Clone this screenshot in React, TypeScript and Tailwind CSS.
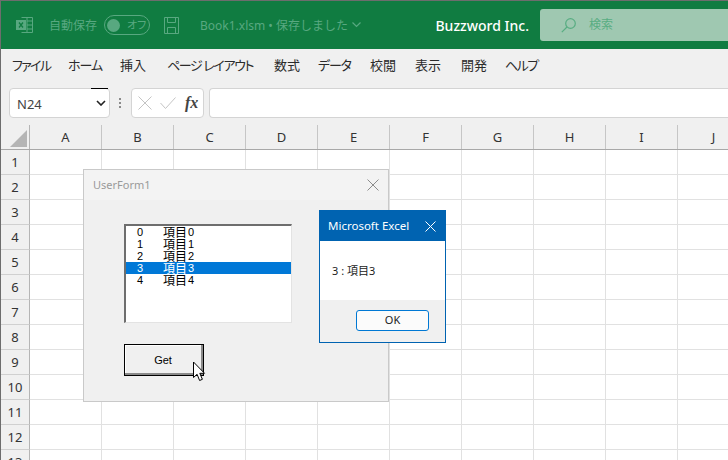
const cjk = "font-['Noto_Sans','Noto_Sans_CJK_JP',sans-serif]"

const menus = [
  { label: "ファイル", w: "w-[56px]", track: "tracking-[-1.7px]" },
  { label: "ホーム", w: "w-[52px]", track: "tracking-[-1px]" },
  { label: "挿入", w: "w-[47px]", track: "" },
  { label: "ページ レイアウト", w: "w-[107px]", track: "tracking-[-1.4px]" },
  { label: "数式", w: "w-[44px]", track: "" },
  { label: "データ", w: "w-[52px]", track: "tracking-[-1.2px]" },
  { label: "校閲", w: "w-[45px]", track: "" },
  { label: "表示", w: "w-[46px]", track: "" },
  { label: "開発", w: "w-[44px]", track: "" },
  { label: "ヘルプ", w: "w-[40px]", track: "tracking-[-1.5px]" },
]
const columns = ["A", "B", "C", "D", "E", "F", "G", "H", "I", "J"]
const rows = [1, 2, 3, 4, 5, 6, 7, 8, 9, 10, 11, 12, 13]
const items = ["0", "1", "2", "3", "4"]

function ExcelIcon() {
  return (
    <svg width="18" height="18" viewBox="0 0 18 18" fill="none" stroke="#58a880" strokeWidth="1">
      <path d="M5.5 1.5h11v15h-11M11 1.5v15M11 5h5.5M11 9h5.5M11 13h5.5" />
      <rect x="0.5" y="4.5" width="9" height="9" fill="#58a880" />
      <path d="M3 6.5l4 5M7 6.5l-4 5" stroke="#107c41" strokeWidth="1.3" />
    </svg>
  )
}

function SaveIcon() {
  return (
    <svg width="17" height="17" viewBox="0 0 17 17" fill="none" stroke="#58a880" strokeWidth="1">
      <path d="M1.5 0.5h14v16h-14zM4.5 0.5v5h8v-5M4.5 16.5v-6h8v6" />
    </svg>
  )
}

function Cursor() {
  return (
    <svg className="absolute left-[192px] top-[361px]" width="14" height="22" viewBox="0 0 14 22">
      <path d="M1.5 1v15.5l3.6-3.2 2.5 6.2 2.8-1.2-2.6-6h4.7z" fill="#fff" stroke="#000" strokeWidth="1" />
    </svg>
  )
}

function UserForm() {
  return (
    <div className="absolute left-[83px] top-[169px] h-[233px] w-[306px] border border-[#c9c9c9] bg-[#f0f0f0]">
      <div className="flex h-[30px] items-center justify-between bg-[#f3f3f3] px-[9px]">
        <span className="font-['Noto_Sans',sans-serif] text-[11px] text-[#9a9a9a]">UserForm1</span>
        <svg width="12" height="12" viewBox="0 0 12 12" stroke="#8c8c8c" strokeWidth="1">
          <path d="M0.5 0.5l11 11M11.5 0.5l-11 11" />
        </svg>
      </div>
      <div className="ml-[40px] mt-[24px] h-[99px] w-[168px] border-t-2 border-l-2 border-r border-b border-t-[#6e6e6e] border-l-[#6e6e6e] border-r-[#e3e3e3] border-b-[#e3e3e3] bg-white">
        {items.map((n, i) => (
          <div
            key={n}
            className={`flex h-[12px] items-center font-['Noto_Sans_CJK_JP',sans-serif] text-[12px] leading-[12px] ${i === 3 ? "bg-[#0078d7] text-white" : "text-black"}`}
          >
            <span className="ml-[11px] w-[26px] font-['Liberation_Sans',sans-serif] text-[11px]">{n}</span>
            <span>項目</span>
            <span className="ml-px font-['Liberation_Sans',sans-serif] text-[11px]">{n}</span>
          </div>
        ))}
      </div>
      <div className="ml-[40px] mt-[21px] flex h-[32px] w-[80px] items-center justify-center border border-black bg-[#f0f0f0] pr-[2px] font-['Liberation_Sans',sans-serif] text-[11px] text-black shadow-[inset_-2px_-2px_0_#8a8a8a,inset_1px_1px_0_#fff]">
        Get
      </div>
    </div>
  )
}

function MessageBox() {
  return (
    <div className="absolute left-[319px] top-[210px] h-[133px] w-[127px] border border-[#0063b1] bg-white">
      <div className="flex h-[30px] items-center justify-between bg-[#0063b1] pl-[8px] pr-[9px]">
        <span className="font-['Noto_Sans',sans-serif] text-[11.5px] text-white">Microsoft Excel</span>
        <svg width="11" height="11" viewBox="0 0 11 11" stroke="#fff" strokeWidth="1">
          <path d="M0.5 0.5l10 10M10.5 0.5l-10 10" />
        </svg>
      </div>
      <div className={`flex h-[59px] items-center pl-[12px] pt-[1px] text-[11px] text-[#222] ${cjk}`}>3 : 項目3</div>
      <div className="flex h-[42px] items-start justify-end bg-[#f0f0f0] pr-[16px] pt-[10px]">
        <div className="flex h-[21px] w-[73px] items-center justify-center rounded-[3px] border border-[#0078d4] bg-[#fbfbfb] font-['Noto_Sans',sans-serif] text-[11px] text-[#222]">
          OK
        </div>
      </div>
    </div>
  )
}

export default function App() {
  return (
    <div className={`relative h-[460px] w-[728px] overflow-hidden bg-[#6d6d6d] pl-px pt-px ${cjk}`}>
      {/* Title bar */}
      <div className="flex h-[48px] items-center bg-[#107c41] text-[#58a880]">
        <div className="ml-[15px]"><ExcelIcon /></div>
        <span className="ml-[15px] mt-px whitespace-nowrap text-[12px]">自動保存</span>
        <div className="ml-[7px] flex h-[20px] w-[46px] items-center rounded-full border border-[#58a880] pl-[2px]">
          <span className="h-[13px] w-[13px] rounded-full bg-[#58a880]" />
          <span className="ml-[7px] whitespace-nowrap text-[11px] [font-feature-settings:'palt']">オフ</span>
        </div>
        <div className="ml-[13px]"><SaveIcon /></div>
        <span className="ml-[20px] mt-px whitespace-nowrap text-[12px]">Book1.xlsm • 保存しました</span>
        <svg className="ml-[4px]" width="9" height="6" viewBox="0 0 9 6" fill="none" stroke="#58a880" strokeWidth="1.2">
          <path d="M0.5 0.5l4 4 4-4" />
        </svg>
        <span className="ml-auto whitespace-nowrap text-[14px] font-medium text-white">Buzzword Inc.</span>
        <div className="ml-[11px] flex h-[32px] w-[188px] items-center rounded-l-[3px] bg-[#9fc8b1] pl-[21px] text-[#58ad82]">
          <svg width="15" height="15" viewBox="0 0 15 15" fill="none" stroke="#58ad82" strokeWidth="1.2">
            <circle cx="9.5" cy="5.5" r="4.8" />
            <path d="M6 9L0.8 14.2" />
          </svg>
          <span className="ml-[13px] text-[12px]">検索</span>
        </div>
      </div>

      {/* Ribbon tabs */}
      <div className="flex h-[39px] items-center bg-[#f0f0f0] pb-[6px] pl-[11px] text-[13px] text-[#2b2b2b] [font-feature-settings:'palt']">
        {menus.map((m) => (
          <span key={m.label} className={`${m.w} ${m.track} shrink-0 whitespace-nowrap`}>{m.label}</span>
        ))}
      </div>

      {/* Formula bar */}
      <div className="flex h-[37px] items-start bg-[#f0f0f0]">
        <div className="relative ml-[8px] flex h-[30px] w-[101px] items-center justify-between rounded-[4px] border border-[#d4d4d4] bg-white pl-[7px] pr-[3px] text-[13px]">
          <span className="pt-[3px] font-['Noto_Sans',sans-serif] text-[#444]">N24</span>
          <svg width="10" height="6" viewBox="0 0 10 6" fill="none" stroke="#222" strokeWidth="1.6">
            <path d="M1 1l4 4 4-4" />
          </svg>
          <span className="absolute right-[1px] top-[-1px] h-px w-[17px] bg-black" />
        </div>
        <div className="ml-[9px] mt-[10px] flex h-[10px] w-[2px] flex-col justify-between">
          <span className="h-[2px] bg-[#8a8a8a]" />
          <span className="h-[2px] bg-[#8a8a8a]" />
          <span className="h-[2px] bg-[#8a8a8a]" />
        </div>
        <div className="ml-[10px] flex h-[30px] w-[73px] items-center rounded-[4px] border border-[#d4d4d4] bg-white pl-[6px]">
          <svg width="14" height="14" viewBox="0 0 14 14" stroke="#c4c4c4" strokeWidth="1">
            <path d="M0.5 0.5l13 13M13.5 0.5l-13 13" />
          </svg>
          <svg className="ml-[8px]" width="16" height="12" viewBox="0 0 16 12" fill="none" stroke="#c4c4c4" strokeWidth="1">
            <path d="M0.5 6l5 5.5 10-11" />
          </svg>
          <span className="ml-[9px] font-['Liberation_Serif',serif] text-[16px] font-bold italic text-[#444]">fx</span>
        </div>
        <div className="ml-[5px] h-[30px] flex-1 rounded-l-[4px] border-y border-l border-[#d4d4d4] bg-white" />
      </div>

      {/* Sheet */}
      <div className="flex h-[25px] border-b border-[#a8a8a8] bg-[#f0f0f0] text-[13px] text-[#333]">
        <div className="flex h-full w-[29px] shrink-0 items-end justify-end border-r border-[#b5b5b5] pb-[2px] pr-[2px]">
          <span className="h-0 w-0 border-b-[17px] border-l-[17px] border-b-[#b5b5b5] border-l-transparent" />
        </div>
        {columns.map((c) => (
          <div key={c} className="flex w-[72px] shrink-0 items-center justify-center border-r border-[#c6c6c6] pt-px">{c}</div>
        ))}
      </div>
      {rows.map((r) => (
        <div key={r} className="flex h-[25px]">
          <div className="flex w-[29px] shrink-0 items-center justify-center border-r border-b border-r-[#b5b5b5] border-b-[#d0d0d0] bg-[#f0f0f0] pt-px text-[13px] text-[#333]">{r}</div>
          {columns.map((c) => (
            <div key={c} className="w-[72px] shrink-0 border-r border-b border-[#e1e1e1] bg-white" />
          ))}
        </div>
      ))}

      <UserForm />
      <MessageBox />
      <Cursor />
    </div>
  )
}
